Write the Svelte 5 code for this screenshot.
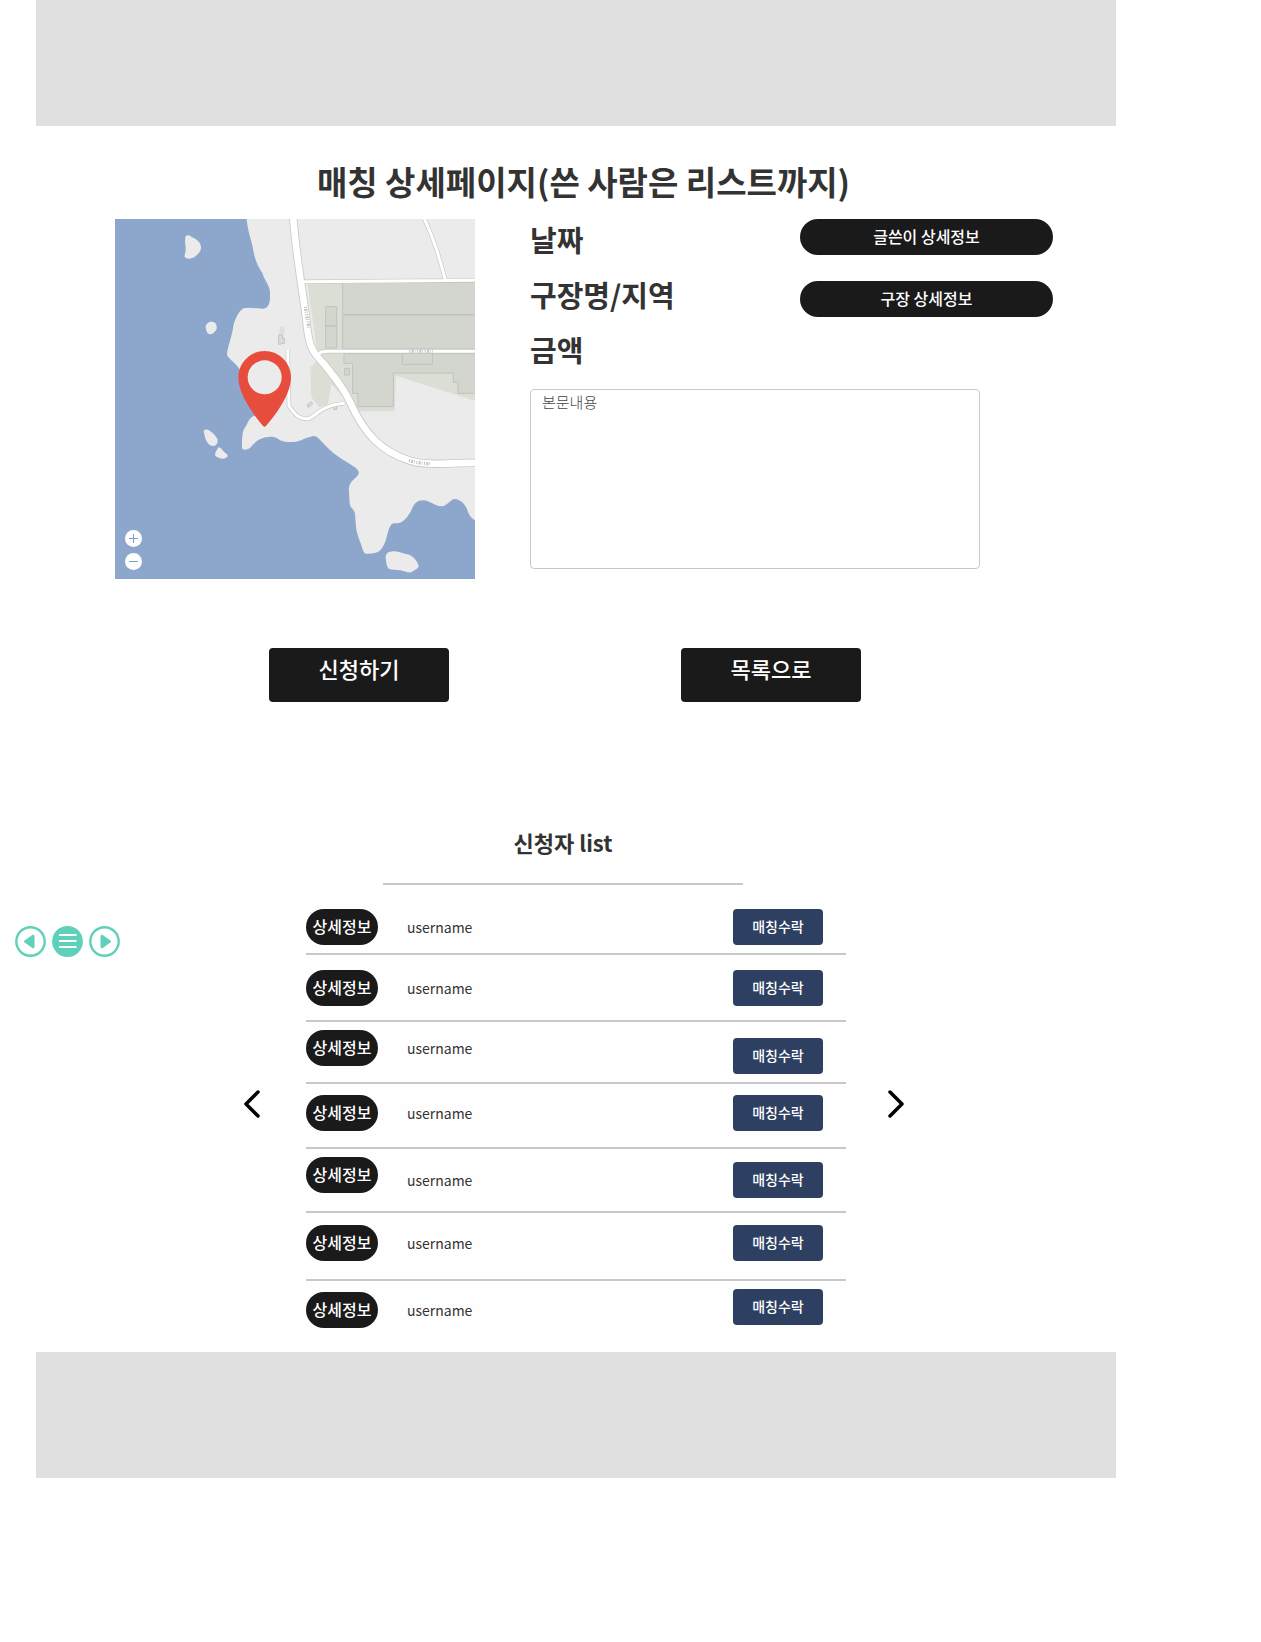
<script>
  const applicants = [
    { id: 1, height: 60, detail: 'end', accept: 'end' },
    { id: 2, height: 67, detail: 'center', accept: 'center' },
    { id: 3, height: 62, detail: 'start', accept: 'end' },
    { id: 4, height: 65, detail: 'center', accept: 'center', raised: true },
    { id: 5, height: 64, detail: 'start', name: 'center', accept: 'center' },
    { id: 6, height: 68, detail: 'center', accept: 'center', raised: true },
    { id: 7, height: 60, detail: 'center', accept: 'start' }
  ];
</script>

<div class="page">
  <header class="band"></header>

  <main>
    <h1>매칭 상세페이지(쓴 사람은 리스트까지)</h1>

    <section class="match">
      <div class="map">
        <svg viewBox="45 57 1080 1080" role="img" aria-label="지도">
          <rect x="45" y="57" width="1080" height="1080" fill="#8da7cc" />
          <g fill="#ebebeb">
            <path d="M440 57C443 95 455 120 460 152C466 186 478 205 487 219C492 238 508 255 510 274V296C508 318 499 326 488 326C466 325 446 321 430 325C418 332 404 358 400 378C396 410 384 435 381 462C382 474 402 484 419 508L470 646C446 648 446 668 434 684C426 694 426 720 426 744C430 754 446 748 452 742C466 724 478 716 497 712C512 709 524 710 533 716C548 726 562 727 580 726C602 725 622 710 641 708C654 708 664 726 690 750C716 774 748 790 768 804C784 820 774 826 762 838C748 850 746 858 747 880C749 900 748 915 753 922C768 936 765 945 767 968C769 1000 776 1012 782 1030C788 1048 790 1060 798 1061C820 1061 836 1060 846 1044C864 1018 860 990 875 972C888 968 897 973 908 964C924 950 930 940 936 926C944 910 952 901 968 901C992 901 1002 919 1024 919C1044 918 1050 897 1066 897C1084 900 1096 914 1102 930C1107 945 1114 956 1125 960V57Z" />
            <path d="M256 110C262 103 270 105 276 112C296 120 303 132 303 142C303 156 292 164 282 172C272 178 256 178 253 168C258 156 258 142 255 128Z" />
            <path d="M317 380C318 370 330 363 340 366C349 369 351 378 350 386C346 394 340 402 331 403C322 402 318 392 317 380Z" />
            <path d="M311 694C314 687 322 688 329 692C340 698 347 708 353 718C354 730 349 738 340 738C330 739 324 732 320 724C314 715 314 704 311 694Z" />
            <path d="M355 742C362 740 366 748 370 754C377 760 384 764 383 769C378 777 368 777 360 775C354 770 346 771 345 764C346 756 351 750 355 742Z" />
            <path d="M857 1070C860 1056 870 1054 884 1054C902 1056 914 1062 928 1064C942 1070 954 1086 956 1098C954 1108 944 1108 936 1116C926 1120 914 1114 902 1111C890 1108 876 1110 866 1106C858 1096 858 1084 857 1070Z" />
          </g>
          <path d="M622 248H1125V603L888 528L884 634H774L738 600L694 552L684 614L658 622L634 592L631 500L655 480Z" fill="#dbded5" />
          <g fill="#d3d6cf" stroke="#bfc2bc" stroke-width="3">
            <path d="M728 247H1130V344H728Z" />
            <path d="M728 345H1130V447H728Z" />
            <path d="M677 320H710V377H677ZM677 378H710V444H677Z" />
            <path d="M732 461H1130V580H1074V547H1060V519H880V620H774V580H758V490H732Z" />
            <path d="M907 460H998V493H907ZM734 505H748V525H734Z" />
            <path d="M536 405H548V415H553V430L536 433Z" fill="#dddddd" />
            <path d="M621 615L634 606L638 612L625 622ZM701 618H710V628H701Z" fill="#dddddd" />
          </g>
          <path d="M889 528L1125 603V640H884Z" fill="#ebebeb" />
          <path d="M540 380L552 378L554 402H537Z" fill="#dfdfdf" />
          <g fill="none" stroke="#c9c9c7">
            <path d="M579 45C586 150 606 260 619 360C627 455 643 458 672 492C710 540 734 570 750 606C792 700 842 754 930 782C990 800 1060 786 1130 789" stroke-width="25" />
            <path d="M612 245L1130 241M658 462C662 454 670 454 684 454H1130M970 50C1004 120 1020 180 1036 240M563 450L567 618C592 654 604 658 626 656C652 644 664 616 734 610" stroke-width="13" />
          </g>
          <g fill="none" stroke="#fff">
            <path d="M579 45C586 150 606 260 619 360C627 455 643 458 672 492C710 540 734 570 750 606C792 700 842 754 930 782C990 800 1060 786 1130 789" stroke-width="20" />
            <path d="M612 245L1130 241M658 462C662 454 670 454 684 454H1130M970 50C1004 120 1020 180 1036 240M563 450L567 618C592 654 604 658 626 656C652 644 664 616 734 610" stroke-width="9" />
          </g>
          <g fill="none" stroke="#c4c4c4" stroke-width="10" stroke-dasharray="3 4 6 3 2 5">
            <path d="M616 320C619 340 623 360 627 386M928 453H999M927 781C948 788 970 791 992 791" />
          </g>
          <path d="M494 453C537 453 573 488 573 532C573 584 526 646 498 678Q494 683 489 678C462 646 415 584 415 532C415 488 451 453 494 453Z" fill="#e84c3d" />
          <circle cx="494" cy="532" r="51" fill="#ebebeb" />
        </svg>
        <div class="zoom">
          <button type="button" aria-label="확대">
            <svg viewBox="0 0 17 17"><path d="M4 8.5H13M8.5 4V13" /></svg>
          </button>
          <button type="button" aria-label="축소">
            <svg viewBox="0 0 17 17"><path d="M4 8.5H13" /></svg>
          </button>
        </div>
      </div>

      <div class="info">
        <div class="summary">
          <div class="labels">
            <h2>날짜</h2>
            <h2>구장명/지역</h2>
            <h2>금액</h2>
          </div>
          <div class="links">
            <button type="button" class="pill">글쓴이 상세정보</button>
            <button type="button" class="pill">구장 상세정보</button>
          </div>
        </div>
        <textarea aria-label="본문내용" placeholder="본문내용"></textarea>
      </div>
    </section>

    <div class="actions">
      <button type="button">신청하기</button>
      <button type="button">목록으로</button>
    </div>

    <div class="list-title">
      <h3>신청자 list</h3>
      <hr />
    </div>

    <section class="applicants">
      <div class="side before">
        <nav class="pager" aria-label="페이지 이동">
          <button type="button" aria-label="이전 페이지">
            <svg viewBox="0 0 31 31"><circle cx="15.5" cy="15.5" r="14.2" fill="none" stroke="#5fd0b9" stroke-width="2.4" /><path d="M9 15.5L18 9Q19 9 19 10V21Q19 22 18 22Z" fill="#5fd0b9" stroke="#5fd0b9" stroke-linejoin="round" /></svg>
          </button>
          <button type="button" aria-label="메뉴">
            <svg viewBox="0 0 31 31"><circle cx="15.5" cy="15.5" r="15.4" fill="#5fd0b9" /><path d="M7 9H24.500M7 15H24.500M7 21H24.500" stroke="#fff" stroke-width="2" /></svg>
          </button>
          <button type="button" aria-label="다음 페이지">
            <svg viewBox="0 0 31 31"><circle cx="15.5" cy="15.5" r="14.2" fill="none" stroke="#5fd0b9" stroke-width="2.4" /><path d="M22 15.500L13 9Q12 9 12 10V21Q12 22 13 22Z" fill="#5fd0b9" stroke="#5fd0b9" stroke-linejoin="round" /></svg>
          </button>
        </nav>
        <button type="button" class="arrow" aria-label="이전">
          <svg viewBox="0 0 16 28"><path d="M14 2L2 14L14 26" /></svg>
        </button>
      </div>

      <ul>
        {#each applicants as person (person.id)}
          <li class:raised={person.raised} style:min-height="{person.height}px">
            <button type="button" class="pill small {person.detail}">상세정보</button>
            <span class="name {person.name ?? person.detail}">username</span>
            <button type="button" class="accept {person.accept}">매칭수락</button>
          </li>
        {/each}
      </ul>

      <div class="side after">
        <button type="button" class="arrow" aria-label="다음">
          <svg viewBox="0 0 16 28"><path d="M2 2L14 14L2 26" /></svg>
        </button>
      </div>
    </section>
  </main>

  <footer class="band"></footer>
</div>

<style>
  :global(body) {
    margin: 0;
    background: #fff;
  }

  .page {
    font-family: 'Noto Sans CJK KR', 'Noto Sans', sans-serif;
    color: #333;
  }

  button {
    border: 0;
    padding: 0;
    background: none;
    font-family: inherit;
    cursor: pointer;
  }

  svg {
    display: block;
  }

  .band {
    height: 126px;
    margin: 0 145px 0 36px;
    background: #e0e0e0;
  }

  h1,
  h2,
  h3 {
    margin: 0;
    font-weight: 700;
  }

  h1 {
    margin: 31px 130px 14px 36px;
    font-size: 33px;
    line-height: 48px;
    text-align: center;
  }

  .match {
    display: grid;
    grid-template-columns: 360px minmax(0, 1fr);
    gap: 55px;
    padding: 0 208px 0 115px;
  }

  .map {
    position: relative;
    align-self: start;
  }

  .zoom {
    position: absolute;
    left: 10px;
    bottom: 9px;
    display: grid;
    gap: 6px;
  }

  .zoom button {
    width: 17px;
    height: 17px;
    border-radius: 50%;
    background: #fff;
  }

  .zoom path {
    stroke: #7f9cc6;
    stroke-width: 1;
  }

  .summary {
    display: flex;
    justify-content: space-between;
    gap: 24px;
    padding-bottom: 5px;
  }

  h2 {
    margin-bottom: 15px;
    font-size: 29px;
    line-height: 40px;
  }

  .links {
    display: flex;
    flex-direction: column;
    gap: 26px;
    width: 253px;
  }

  .pill {
    height: 36px;
    padding-bottom: 2px;
    border-radius: 18px;
    background: #1a1a1a;
    color: #fff;
    font-size: 16px;
    font-weight: 500;
    line-height: 24px;
  }

  .pill.small {
    width: 72px;
  }

  textarea {
    display: block;
    box-sizing: border-box;
    width: 100%;
    max-width: 450px;
    height: 180px;
    padding: 2px 11px;
    border: 1px solid #c8c8c8;
    border-radius: 4px;
    background: #fff;
    font-family: inherit;
    font-size: 15px;
    font-weight: 300;
    line-height: 20px;
    resize: none;
  }

  textarea::placeholder {
    color: #444;
  }

  .actions {
    display: flex;
    justify-content: center;
    gap: 232px;
    padding: 69px 167px 0 36px;
  }

  .actions button {
    width: 180px;
    height: 54px;
    padding-bottom: 14px;
    border-radius: 4px;
    background: #1a1a1a;
    color: #fff;
    font-size: 22px;
    font-weight: 500;
    line-height: 32px;
  }

  .list-title {
    padding: 124px 171px 8px 36px;
    text-align: center;
  }

  h3 {
    font-size: 22px;
    line-height: 32px;
  }

  hr {
    width: 360px;
    height: 2px;
    margin: 25px auto 0;
    border: 0;
    background: #c8c8c8;
  }

  .applicants {
    display: grid;
    grid-template-columns: 1fr minmax(0, 540px) 1fr;
    padding: 0 124px 9px 15px;
  }

  .side {
    display: flex;
    align-items: center;
  }

  .before {
    justify-content: space-between;
    padding-right: 46px;
  }

  .after {
    padding-left: 42px;
  }

  .pager {
    display: flex;
    align-self: flex-start;
    gap: 6px;
    padding-top: 33px;
  }

  .pager svg {
    width: 31px;
    height: 31px;
  }

  .arrow {
    padding-bottom: 28px;
  }

  .arrow svg {
    width: 16px;
    height: 28px;
  }

  .arrow path {
    fill: none;
    stroke: #000;
    stroke-width: 3.5;
    stroke-linecap: round;
    stroke-linejoin: round;
  }

  ul {
    margin: 0;
    padding: 0 0 4px;
    list-style: none;
    background: #fefefe;
  }

  li {
    display: flex;
    box-sizing: border-box;
    padding-right: 23px;
  }

  li + li {
    border-top: 2px solid #c8c8c8;
  }

  .raised {
    padding-bottom: 6px;
  }

  .name {
    flex: 1;
    padding-left: 29px;
    font-size: 14px;
    line-height: 36px;
  }

  .accept {
    width: 90px;
    height: 36px;
    padding-bottom: 2px;
    border-radius: 4px;
    background: #2d4061;
    color: #fff;
    font-size: 14px;
    font-weight: 500;
    line-height: 20px;
  }

  .start {
    align-self: flex-start;
    margin-top: 8px;
  }

  .center {
    align-self: center;
  }

  .end {
    align-self: flex-end;
    margin-bottom: 8px;
  }
</style>
